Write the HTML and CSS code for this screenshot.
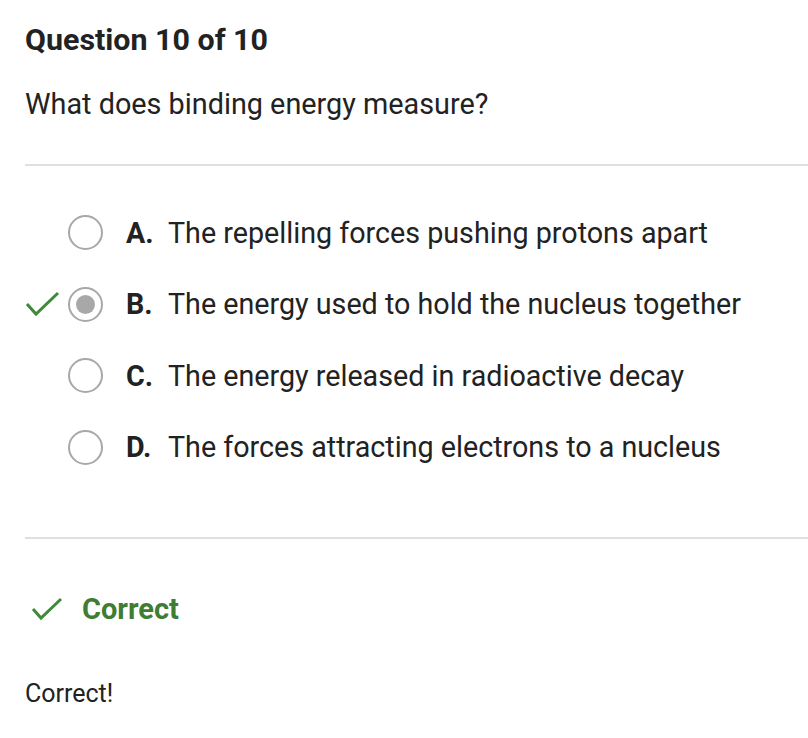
FILE: index.html
```html
<!DOCTYPE html>
<html>
<head>
<meta charset="utf-8">
<link rel="stylesheet" href="styles.css">
</head>
<body>
<div class="page">
  <h1 class="title">Question 10 of 10</h1>
  <p class="question">What does binding energy measure?</p>
  <hr class="divider">
  <ul class="options">
    <li class="option">
      <span class="mark"></span>
      <span class="radio"></span>
      <span class="letter">A.</span>
      <span class="text">The repelling forces pushing protons apart</span>
    </li>
    <li class="option">
      <span class="mark"><svg width="36" height="28" viewBox="0 0 36 28"><path d="M2 14 L11 24 L33 3" fill="none" stroke="#3f8a3a" stroke-width="3"/></svg></span>
      <span class="radio selected"><span class="dot"></span></span>
      <span class="letter">B.</span>
      <span class="text">The energy used to hold the nucleus together</span>
    </li>
    <li class="option">
      <span class="mark"></span>
      <span class="radio"></span>
      <span class="letter">C.</span>
      <span class="text">The energy released in radioactive decay</span>
    </li>
    <li class="option">
      <span class="mark"></span>
      <span class="radio"></span>
      <span class="letter">D.</span>
      <span class="text">The forces attracting electrons to a nucleus</span>
    </li>
  </ul>
  <hr class="divider">
  <div class="result">
    <svg width="32" height="26" viewBox="0 0 32 26"><path d="M2 13 L10 22 L30 3" fill="none" stroke="#3f8a3a" stroke-width="3"/></svg>
    <span class="result-label">Correct</span>
  </div>
  <p class="feedback">Correct!</p>
</div>
</body>
</html>
```

FILE: styles.css
```css
html, body {
  margin: 0;
  padding: 0;
  background: #fff;
}
body {
  font-family: Roboto, "Liberation Sans", sans-serif;
  color: #222;
}
.page {
  padding: 0 0 0 25px;
}
.title {
  margin: 0;
  padding-top: 20px;
  font-size: 30.4px;
  line-height: 40px;
  font-weight: 700;
}
.question {
  margin: 24px 0 0;
  font-size: 28.8px;
  line-height: 40px;
}
.divider {
  margin: 0;
  border: 0;
  height: 2px;
  background: #e0e0e0;
}
.question + .divider {
  margin-top: 40px;
}
.options {
  list-style: none;
  margin: 0;
  padding: 31px 0 0;
}
.option {
  display: flex;
  align-items: center;
  height: 71.5px;
  font-size: 28.7px;
}
.mark {
  width: 43px;
  display: flex;
  align-items: center;
}
.radio {
  width: 31px;
  height: 31px;
  border: 2px solid #a8a8a8;
  border-radius: 50%;
  display: flex;
  align-items: center;
  justify-content: center;
  flex: none;
}
.dot {
  width: 19px;
  height: 19px;
  border-radius: 50%;
  background: #a8a8a8;
}
.letter {
  font-weight: 700;
  margin-left: 23px;
  width: 42px;
}
.options + .divider {
  margin-top: 54px;
}
.result {
  display: flex;
  align-items: center;
  margin-top: 53px;
  gap: 19px;
  padding-left: 6px;
}
.result-label {
  color: #3f7d35;
  font-weight: 700;
  font-size: 29px;
}
.feedback {
  margin: 53px 0 0;
  font-size: 25px;
}
```
